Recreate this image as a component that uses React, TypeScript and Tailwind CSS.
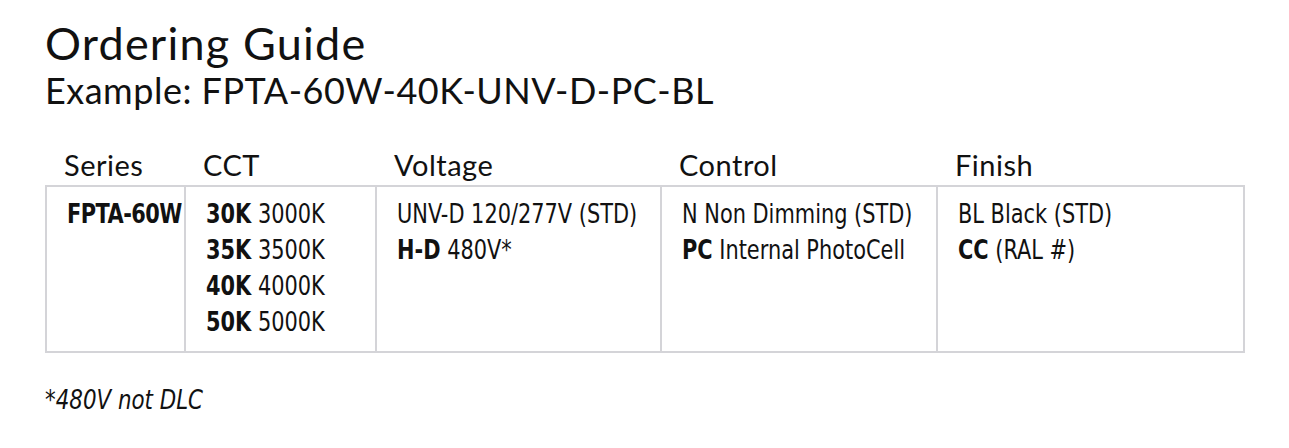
const cond = "font-['DejaVu_Sans_Condensed','DejaVu_Sans',sans-serif] [font-stretch:condensed]";

const columns = [
  { title: "Series", lines: [[<b key="a" className="tracking-[-0.6px]">FPTA-60W</b>]] },
  {
    title: "CCT",
    lines: [
      [<b key="a">30K</b>, " 3000K"],
      [<b key="a">35K</b>, " 3500K"],
      [<b key="a">40K</b>, " 4000K"],
      [<b key="a">50K</b>, " 5000K"],
    ],
  },
  {
    title: "Voltage",
    lines: [["UNV-D 120/277V (STD)"], [<b key="a">H-D</b>, " 480V*"]],
  },
  {
    title: "Control",
    lines: [["N Non Dimming (STD)"], [<b key="a">PC</b>, " Internal PhotoCell"]],
  },
  {
    title: "Finish",
    lines: [["BL Black (STD)"], [<b key="a">CC</b>, " (RAL #)"]],
  },
];

export default function App() {
  return (
    <div className="w-[1289px] h-[448px] bg-white text-[#111] pl-[45px] pt-[19px] font-['Lato',sans-serif]">
      {/* Heading */}
      <h1 className="text-[45px] leading-[48px] tracking-[1.2px]">Ordering Guide</h1>
      <p className="text-[36px] leading-[44px] tracking-[0.5px] mt-[1px]">Example: FPTA-60W-40K-UNV-D-PC-BL</p>

      {/* Table */}
      <div className="w-[1200px] mt-[35px]">
        <div className="grid grid-cols-[139px_191px_285px_276px_1fr]">
          {columns.map((c) => (
            <div key={c.title} className="pl-[19px] text-[29px] leading-[36px] tracking-[0.5px]">
              {c.title}
            </div>
          ))}
        </div>
        <div
          className={`grid grid-cols-[137px_191px_285px_276px_1fr] mt-[2px] h-[168px] border-2 border-[#d4d4d8] ${cond}`}
        >
          {columns.map((c, i) => (
            <div
              key={c.title}
              className={`pl-[20px] pt-[9px] text-[27px] leading-[36px] ${i > 0 ? "border-l-2 border-[#d4d4d8]" : ""}`}
            >
              <div className="origin-left scale-x-[0.86]">
                {c.lines.map((l, j) => (
                  <div key={j} className="whitespace-nowrap">
                    {l}
                  </div>
                ))}
              </div>
            </div>
          ))}
        </div>
      </div>

      {/* Note */}
      <p className={`${cond} italic text-[27px] leading-[36px] mt-[29px] origin-left scale-x-[0.88]`}>
        *480V not DLC
      </p>
    </div>
  );
}
